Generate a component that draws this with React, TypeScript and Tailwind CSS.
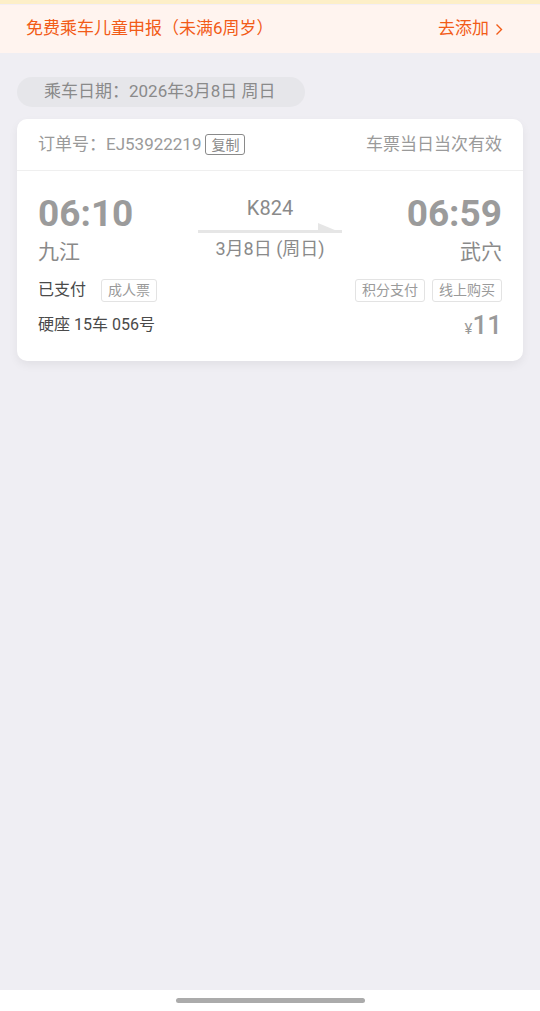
import React from 'react';

const font = { fontFamily: 'Roboto, "Noto Sans CJK SC", sans-serif' };

const Tag = ({ children }: { children: React.ReactNode }) => (
  <span className="inline-flex h-[23px] items-center rounded-[3px] border border-[#e3e3e3] px-[6px] text-[14px] leading-none text-[#9a9a9a]">
    {children}
  </span>
);

export default function App() {
  return (
    <div className="flex min-h-[1011px] w-[540px] flex-col bg-[#efeef3]" style={font}>
      {/* top strip */}
      <div className="h-[4px] bg-[#fdefc8]" />
      <div className="h-[1px] bg-[#f4eef4]" />

      {/* child notice banner */}
      <div className="flex h-[48px] items-center justify-between bg-[#fff4ef] pl-[26px] pr-[37px] text-[17px] text-[#f25b17]">
        <span>免费乘车儿童申报（未满6周岁）</span>
        <span className="flex items-center gap-[6px]">
          去添加
          <svg width="8" height="13" viewBox="0 0 8 13" fill="none">
            <path d="M1.5 1.5 L6.5 6.5 L1.5 11.5" stroke="#f25b17" strokeWidth="1.4" />
          </svg>
        </span>
      </div>

      {/* travel date */}
      <div className="mt-[24px] ml-[17px] flex h-[30px] w-[288px] items-center rounded-full bg-[#e6e6ea] pl-[27px] text-[17px] text-[#8a8a8a]">
        乘车日期：2026年3月8日 周日
      </div>

      {/* ticket card */}
      <div className="mx-[17px] mt-[12px] rounded-[10px] bg-white shadow-[0_4px_10px_rgba(0,0,0,0.06)]">
        <div className="flex h-[52px] items-center justify-between border-b border-[#efefef] px-[21px] text-[17px] text-[#9a9a9a]">
          <div className="flex items-center">
            <span>订单号：EJ53922219</span>
            <span className="ml-[4px] inline-flex h-[21px] items-center rounded-[3px] border border-[#8a8a8a] px-[5px] text-[14px] leading-none text-[#8a8a8a]">
              复制
            </span>
          </div>
          <span>车票当日当次有效</span>
        </div>

        <div className="px-[21px] pt-[22px] pb-[20px]">
          <div className="flex items-start justify-between">
            <div className="flex flex-col">
              <span className="text-[37px] leading-[42px] font-bold text-[#9b9b9b]">06:10</span>
              <span className="mt-[4px] text-[21px] leading-[26px] text-[#8a8a8a]">九江</span>
            </div>
            <div className="mt-[2px] flex w-[144px] flex-col items-center">
              <span className="text-[20px] leading-[26px] text-[#8a8a8a]">K824</span>
              <svg width="144" height="10" viewBox="0 0 144 10" className="mt-[2px]">
                <rect x="0" y="7" width="144" height="3" fill="#e6e6e6" />
                <polygon points="120,0 144,10 120,10" fill="#e6e6e6" />
              </svg>
              <span className="mt-[4px] text-[18px] leading-[24px] text-[#8a8a8a]">3月8日 (周日)</span>
            </div>
            <div className="flex flex-col items-end">
              <span className="text-[37px] leading-[42px] font-bold text-[#9b9b9b]">06:59</span>
              <span className="mt-[4px] text-[21px] leading-[26px] text-[#8a8a8a]">武穴</span>
            </div>
          </div>

          <div className="mt-[13px] flex items-center justify-between">
            <div className="flex items-center gap-[15px]">
              <span className="text-[16px] text-[#4a4a4a]">已支付</span>
              <Tag>成人票</Tag>
            </div>
            <div className="flex items-center gap-[7px]">
              <Tag>积分支付</Tag>
              <Tag>线上购买</Tag>
            </div>
          </div>

          <div className="mt-[8px] flex items-center justify-between">
            <span className="text-[16px] text-[#4a4a4a]">硬座 15车 056号</span>
            <span className="flex items-baseline text-[#9a9a9a]">
              <span className="text-[15px]">¥</span>
              <span className="text-[26px] leading-[30px] font-medium">11</span>
            </span>
          </div>
        </div>
      </div>

      <div className="flex-1" />

      {/* home indicator */}
      <div className="flex h-[21px] justify-center bg-white pt-[8px]">
        <div className="h-[5px] w-[189px] rounded-full bg-[#ababab]" />
      </div>
    </div>
  );
}
